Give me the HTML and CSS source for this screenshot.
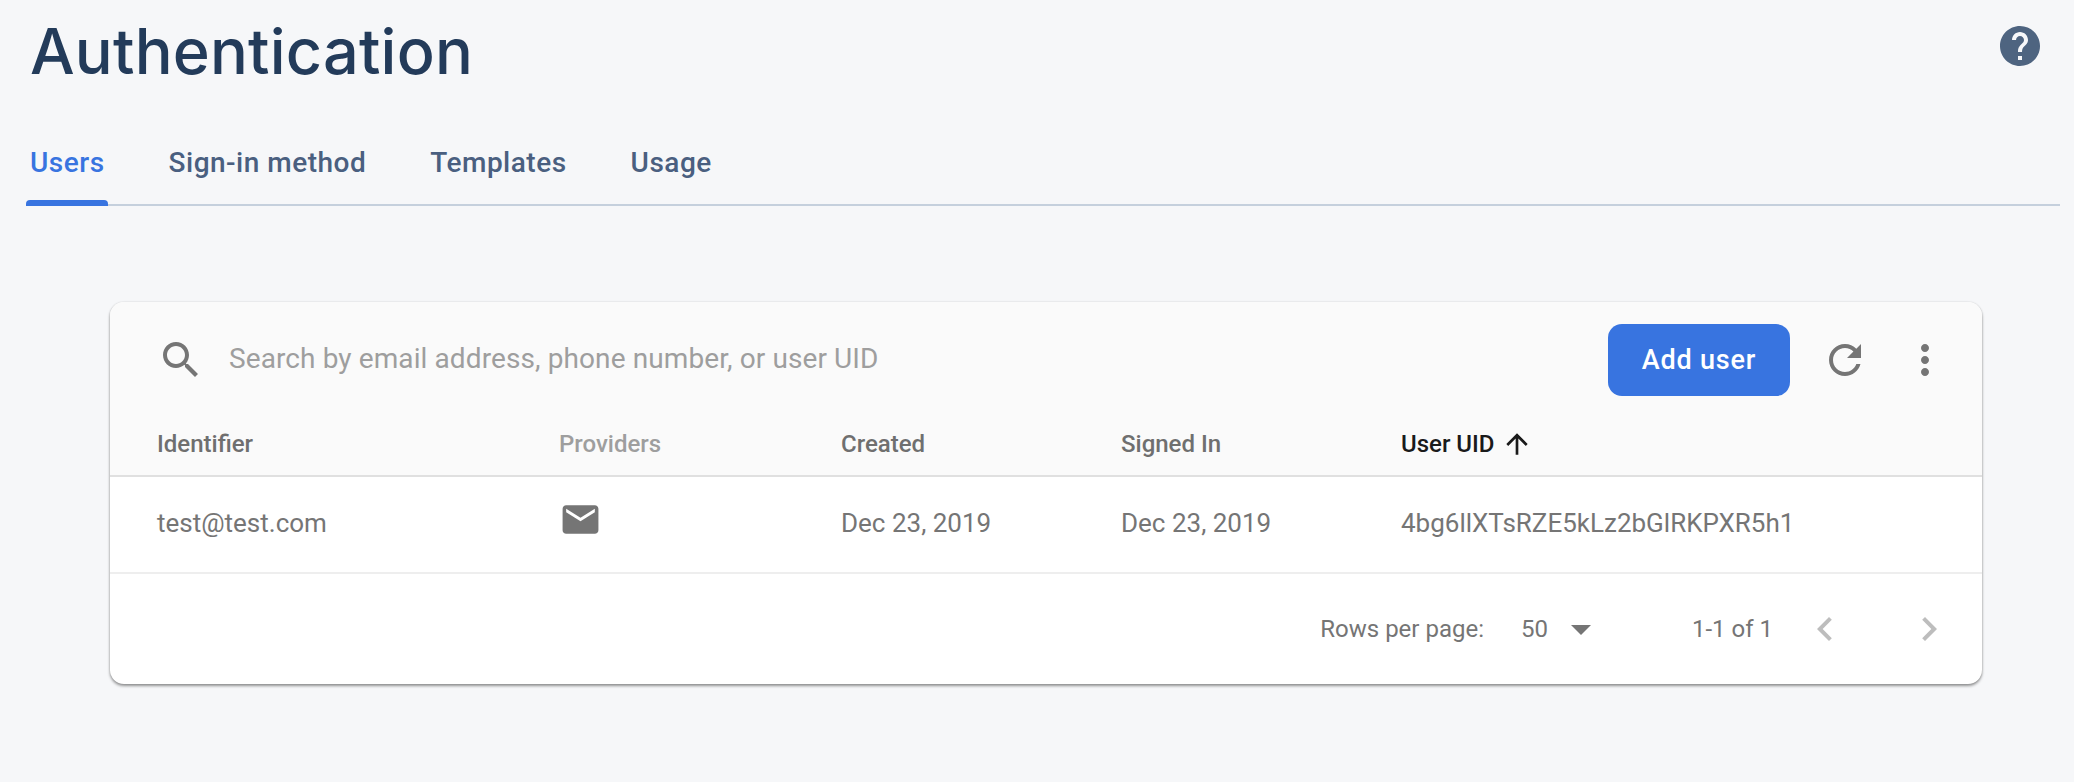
FILE: index.html
```html
<!DOCTYPE html>
<html lang="en">
<head>
    <meta charset="UTF-8">
    <meta name="viewport" content="width=device-width, initial-scale=1.0">
    <title>Authentication</title>
    <link rel="stylesheet" href="styles.css">
</head>
<body>
    <div class="page">
        <div class="page-head">
            <h1>Authentication</h1>
            <svg class="icon help" viewBox="0 0 24 24"><path d="M12 2C6.48 2 2 6.48 2 12s4.48 10 10 10 10-4.48 10-10S17.52 2 12 2zm1 17h-2v-2h2v2zm2.07-7.75l-.9.92C13.45 12.9 13 13.5 13 15h-2v-.5c0-1.1.45-2.1 1.17-2.83l1.24-1.26c.37-.36.59-.86.59-1.41 0-1.1-.9-2-2-2s-2 .9-2 2H8c0-2.21 1.79-4 4-4s4 1.79 4 4c0 .88-.36 1.68-.93 2.25z"/></svg>
        </div>

        <div class="tabs">
            <a class="tab active">Users</a>
            <a class="tab">Sign-in method</a>
            <a class="tab">Templates</a>
            <a class="tab">Usage</a>
        </div>

        <div class="card">
            <div class="card-top">
                <div class="toolbar">
                    <svg class="icon" viewBox="0 0 24 24"><path d="M15.5 14h-.79l-.28-.27C15.41 12.59 16 11.11 16 9.5 16 5.91 13.09 3 9.5 3S3 5.91 3 9.5 5.91 16 9.5 16c1.61 0 3.09-.59 4.23-1.57l.27.28v.79l5 4.99L20.49 19l-4.99-5zm-6 0C7.01 14 5 11.99 5 9.5S7.01 5 9.5 5 14 7.01 14 9.5 11.99 14 9.5 14z"/></svg>
                    <span class="search-text">Search by email address, phone number, or user UID</span>
                    <button class="add-btn">Add user</button>
                    <svg class="icon" viewBox="0 0 24 24"><path d="M17.65 6.35C16.2 4.9 14.21 4 12 4c-4.42 0-7.99 3.58-7.99 8s3.57 8 7.99 8c3.73 0 6.84-2.55 7.73-6h-2.08c-.82 2.33-3.04 4-5.65 4-3.31 0-6-2.69-6-6s2.69-6 6-6c1.66 0 3.14.69 4.22 1.78L13 11h7V4l-2.35 2.35z"/></svg>
                    <svg class="icon" viewBox="0 0 24 24"><path d="M12 8c1.1 0 2-.9 2-2s-.9-2-2-2-2 .9-2 2 .9 2 2 2zm0 2c-1.1 0-2 .9-2 2s.9 2 2 2 2-.9 2-2-.9-2-2-2zm0 6c-1.1 0-2 .9-2 2s.9 2 2 2 2-.9 2-2-.9-2-2-2z"/></svg>
                </div>
                <div class="row head-row">
                    <div>Identifier</div>
                    <div class="muted">Providers</div>
                    <div>Created</div>
                    <div>Signed In</div>
                    <div class="sorted">User UID
                        <svg class="arrow" viewBox="0 0 24 24"><path d="M4 12l1.41 1.41L11 7.83V20h2V7.83l5.58 5.59L20 12l-8-8-8 8z"/></svg>
                    </div>
                </div>
            </div>

            <div class="row body-row">
                <div>test@test.com</div>
                <div><svg class="mail" viewBox="0 0 24 24"><path d="M20 4H4c-1.1 0-1.99.9-1.99 2L2 18c0 1.1.9 2 2 2h16c1.1 0 2-.9 2-2V6c0-1.1-.9-2-2-2zm0 4l-8 5-8-5V6l8 5 8-5v2z"/></svg></div>
                <div>Dec 23, 2019</div>
                <div>Dec 23, 2019</div>
                <div>4bg6llXTsRZE5kLz2bGlRKPXR5h1</div>
            </div>

            <div class="pager">
                <span>Rows per page:</span>
                <span class="page-size">50</span>
                <svg class="icon" viewBox="0 0 24 24"><path d="M7 10l5 5 5-5z"/></svg>
                <span class="page-range">1-1 of 1</span>
                <svg class="icon disabled" viewBox="0 0 24 24"><path d="M15.41 7.41L14 6l-6 6 6 6 1.41-1.41L10.83 12z"/></svg>
                <svg class="icon disabled next" viewBox="0 0 24 24"><path d="M10 6L8.59 7.41 13.17 12l-4.58 4.59L10 18l6-6z"/></svg>
            </div>
        </div>
    </div>
</body>
</html>
```

FILE: styles.css
```css
body {
    font-family: Roboto, Arial, sans-serif;
    background-color: #f6f7f9;
    color: #757575;
    margin: 0;
}

.page {
    padding: 0 14px 98px 26px;
}

.page-head {
    display: flex;
    justify-content: space-between;
    align-items: flex-start;
    height: 134px;
    padding: 22px 16px 0 4px;
    box-sizing: border-box;
}

h1 {
    margin: -1px 0 0;
    font-family: Inter, Roboto, sans-serif;
    font-size: 63px;
    font-weight: 500;
    letter-spacing: 0.2px;
    line-height: 60px;
    color: #233b5a;
}

.icon {
    width: 48px;
    height: 48px;
    fill: #757575;
    flex: none;
}

.help {
    fill: #4e6480;
}

.tabs {
    display: flex;
    gap: 57px;
    height: 72px;
    box-sizing: border-box;
    border-bottom: 2px solid #c5d0dd;
}

.tab {
    position: relative;
    padding: 0 3px 0 4px;
    font-size: 28px;
    font-weight: 500;
    letter-spacing: 0.5px;
    line-height: 58px;
    color: #4a5f80;
}

.tab.active {
    color: #3874e0;
}

.tab.active::after {
    content: "";
    position: absolute;
    left: 0;
    right: 0;
    bottom: -2px;
    height: 6px;
    background: #3874e0;
    border-radius: 4px 4px 0 0;
}

.card {
    margin: 96px 78px 0 84px;
    background: #fff;
    border-radius: 14px;
    box-shadow: 0 0 2px rgba(0, 0, 0, 0.15), 0 2px 3px rgba(0, 0, 0, 0.4);
    overflow: hidden;
}

.card-top {
    background: #fafafa;
}

.toolbar {
    display: flex;
    align-items: center;
    height: 116px;
    padding: 0 33px 0 47px;
    box-sizing: border-box;
}

.search-text {
    flex: 1;
    margin-left: 24px;
    margin-bottom: 4px;
    font-size: 28px;
    letter-spacing: 0.1px;
    color: #9e9e9e;
}

.add-btn {
    width: 182px;
    height: 72px;
    margin-right: 31px;
    padding: 0;
    background: #3874e0;
    color: white;
    border: none;
    border-radius: 14px;
    font-family: inherit;
    font-size: 27px;
    font-weight: 500;
    letter-spacing: 0.8px;
}

.toolbar .icon:last-child {
    margin-left: 32px;
}

.row {
    display: grid;
    grid-template-columns: 402px 282px 280px 280px 1fr;
    align-items: center;
    padding-left: 47px;
}

.head-row {
    height: 59px;
    padding-bottom: 6px;
    box-sizing: border-box;
    border-bottom: 2px solid #e0e0e0;
    font-size: 24px;
    font-weight: 500;
    color: #6f6f6f;
}

.muted {
    color: #9e9e9e;
}

.sorted {
    display: flex;
    align-items: center;
    gap: 6px;
    color: #1a1a1a;
}

.arrow {
    width: 32px;
    height: 32px;
    fill: #1a1a1a;
}

.body-row {
    height: 97px;
    padding-bottom: 3px;
    box-sizing: border-box;
    border-bottom: 2px solid #eeeeee;
    font-size: 26px;
}

.mail {
    display: block;
    width: 43px;
    height: 43px;
    margin-bottom: 8px;
    fill: #757575;
}

.pager {
    display: flex;
    align-items: center;
    justify-content: flex-end;
    height: 110px;
    padding: 0 29px 0 0;
    box-sizing: border-box;
    font-size: 24px;
}

.page-size {
    margin-left: 37px;
    margin-right: 9px;
}

.page-range {
    margin-left: 87px;
    margin-right: 28px;
}

.disabled {
    fill: #bdbdbd;
}

.next {
    margin-left: 56px;
}
```
